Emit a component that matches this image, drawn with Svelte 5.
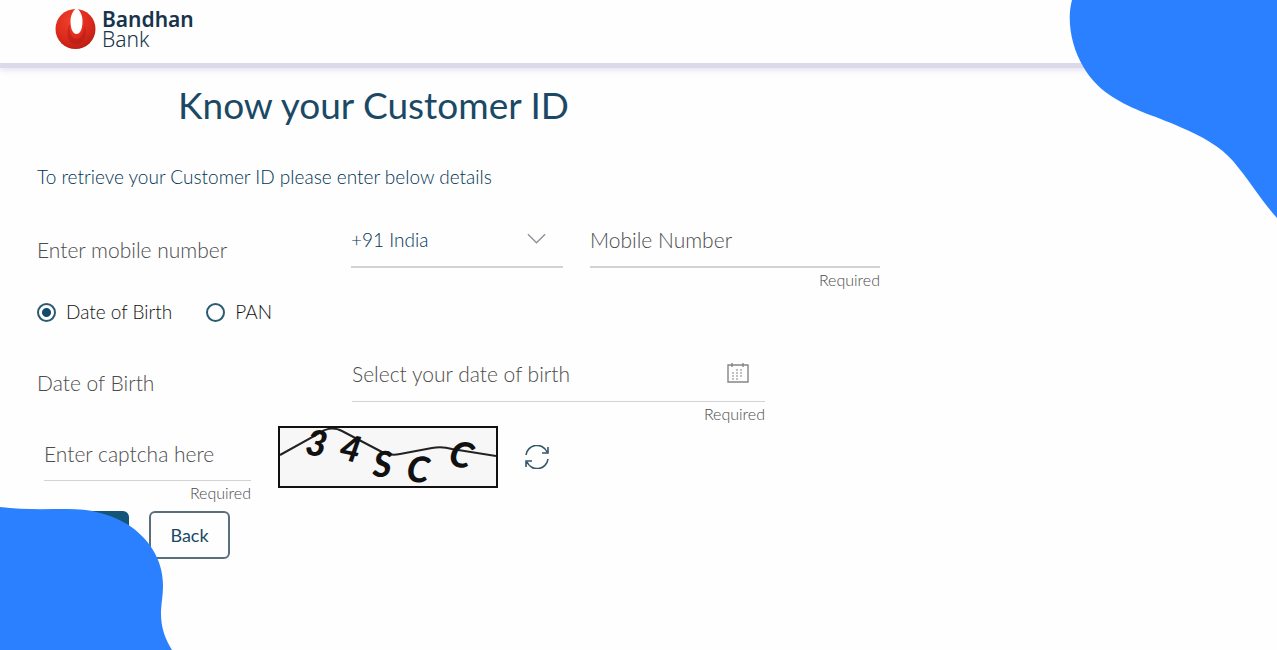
<script>
  const countries = [
    { code: '+91', name: 'India' },
    { code: '+1', name: 'USA' },
    { code: '+44', name: 'UK' },
  ];

  // hand-placed captcha characters
  const captcha = [
    { char: '3', x: 26, y: 28, angle: 10 },
    { char: '4', x: 60, y: 33, angle: 12 },
    { char: 'S', x: 93, y: 49, angle: 4 },
    { char: 'C', x: 127, y: 54, angle: 6 },
    { char: 'C', x: 170, y: 39, angle: 16 },
  ];

  let country = $state('+91');
  let mobile = $state('');
  let method = $state('dob');
  let dob = $state('');
  let captchaValue = $state('');

  function handleSubmit(event) {
    event.preventDefault();
  }
</script>

<div class="page">
  <header class="header">
    <a class="brand" href="/" aria-label="Bandhan Bank">
      <svg class="brand-mark" viewBox="0 0 40 42" aria-hidden="true">
        <defs>
          <radialGradient id="markFill" cx="0.4" cy="0.3" r="0.75">
            <stop offset="0" stop-color="#f0402c" />
            <stop offset="0.6" stop-color="#dd2a1c" />
            <stop offset="1" stop-color="#b81d16" />
          </radialGradient>
        </defs>
        <circle cx="20" cy="21" r="20" fill="url(#markFill)" />
        <path d="M14 16C14 27 17 31 21 31s7-4 8-14c3 9 1 18-8 19-9 0-11-10-7-20z" fill="#a81812" opacity="0.45" />
        <path d="M21 0c4 3 6 8 6 13 0 7-2 13-6 13s-6-6-6-13c0-5 2-10 6-13z" fill="#fff" />
      </svg>
      <span class="brand-name"><b>Bandhan</b><span>Bank</span></span>
    </a>
  </header>

  <main class="content">
    <h1>Know your Customer ID</h1>
    <p class="intro">To retrieve your Customer ID please enter below details</p>

    <form onsubmit={handleSubmit}>
      <div class="row mobile-row">
        <label class="label" for="mobile">Enter mobile number</label>
        <div class="field select-field">
          <select bind:value={country} aria-label="Country code">
            {#each countries as item}
              <option value={item.code}>{item.code} {item.name}</option>
            {/each}
          </select>
          <svg class="chevron" viewBox="0 0 20 12" aria-hidden="true">
            <path d="M1 1l9 9 9-9" />
          </svg>
        </div>
        <div class="field">
          <input id="mobile" type="tel" placeholder="Mobile Number" bind:value={mobile} />
          <span class="hint">Required</span>
        </div>
      </div>

      <div class="methods" role="radiogroup" aria-label="Verify with">
        <label><input type="radio" value="dob" bind:group={method} />Date of Birth</label>
        <label><input type="radio" value="pan" bind:group={method} />PAN</label>
      </div>

      <div class="row dob-row">
        <label class="label" for="dob">Date of Birth</label>
        <div class="field">
          <div class="with-icon">
            <input id="dob" type="text" placeholder="Select your date of birth" bind:value={dob} />
            <button class="icon-button" type="button" aria-label="Open calendar">
              <svg class="calendar" viewBox="0 0 22 20" aria-hidden="true">
                <path d="M1 2h20v17H1zM5 0v4M16 0v4" />
                <path class="dots" d="M9 7h8M5 10h12M5 13h12M5 16h8" />
              </svg>
            </button>
          </div>
          <span class="hint">Required</span>
        </div>
      </div>

      <div class="captcha-row">
        <div class="field">
          <input type="text" placeholder="Enter captcha here" aria-label="Captcha" bind:value={captchaValue} />
          <span class="hint">Required</span>
        </div>
        <svg class="captcha" viewBox="0 0 216 58" role="img" aria-label="Captcha image">
          <path d="M0 27L38 6Q50-3 62 3L102 24Q110 28 120 26L152 20Q162 18 172 21L216 28" />
          {#each captcha as item}
            <text x={item.x} y={item.y} transform="rotate({item.angle} {item.x + 10} {item.y - 12})">{item.char}</text>
          {/each}
        </svg>
        <button class="icon-button" type="button" aria-label="Reload captcha">
          <svg class="reload" viewBox="0 0 24 24" aria-hidden="true">
            <path d="M1 10A11 11 0 0 1 22 7M23 2v6h-6M23 14A11 11 0 0 1 2 17M1 22v-6h6" />
          </svg>
        </button>
      </div>

      <div class="actions">
        <button class="button primary" type="submit" aria-label="Next"></button>
        <button class="button" type="button">Back</button>
      </div>
    </form>
  </main>

  <svg class="blob blob-top" viewBox="0 0 210 220" aria-hidden="true">
    <path d="M5 0C0 18 3 45 17 68C30 90 50 101 73 111C88 117 100 121 113 127C135 136 154 147 166 161C182 180 194 200 210 218V0z" />
  </svg>
  <svg class="blob blob-bottom" viewBox="0 0 180 145" aria-hidden="true">
    <path d="M0 2C22 5 45 4 67 4C90 4 108 8 127 19C149 33 163 55 163 80C163 92 161 99 161 109C161 122 165 134 172 145H0z" />
  </svg>
</div>

<style>
  :global(body) {
    margin: 0;
    background: #fefefe;
  }

  .page {
    position: relative;
    min-height: 100vh;
    overflow: hidden;
    font-family: Lato, "Liberation Sans", sans-serif;
    font-size: 19px;
    font-weight: 300;
    line-height: 24px;
    color: #4c4c4c;
  }

  .header {
    display: flex;
    align-items: center;
    height: 57px;
    padding: 0 55px 6px;
    border-bottom: 5px solid #dcd9e9;
    box-shadow: 0 2px 6px #e3e0f0;
  }

  .brand {
    display: flex;
    align-items: center;
    gap: 6px;
    color: #17344c;
    text-decoration: none;
  }

  .brand-mark {
    width: 41px;
    height: 42px;
  }

  .brand-name {
    display: flex;
    flex-direction: column;
    font-family: "Noto Sans", sans-serif;
    font-size: 21px;
    line-height: 20px;
  }

  .brand-name b {
    font-weight: 600;
  }

  .content {
    max-width: 843px;
    padding: 13px 37px 0;
  }

  h1 {
    margin: 0 0 36px 141px;
    font-size: 37px;
    font-weight: 400;
    line-height: 48px;
    color: #1b4965;
  }

  .intro {
    margin: 0 0 39px;
    color: #003454;
  }

  .row {
    display: grid;
  }

  .mobile-row {
    grid-template-columns: 314fr 212fr 27fr 290fr;
  }

  .mobile-row .field:last-child {
    grid-column: 4;
  }

  .label {
    padding-top: 10px;
    font-size: 21px;
  }

  .field {
    display: flex;
    flex-direction: column;
    min-width: 0;
  }

  .field input,
  .field select {
    width: 100%;
    height: 40px;
    box-sizing: border-box;
    padding: 0 0 14px;
    border: 0;
    border-bottom: 2px solid #d3d3d3;
    border-radius: 0;
    background: transparent;
    font: inherit;
    color: #003454;
    outline: none;
    appearance: none;
  }

  .field input {
    padding-bottom: 15px;
    font-size: 21px;
  }

  .field input::placeholder {
    color: #4c4c4c;
    opacity: 1;
  }

  .hint {
    align-self: flex-end;
    font-size: 16px;
    line-height: 24px;
  }

  .select-field {
    position: relative;
  }

  .chevron {
    position: absolute;
    top: 5px;
    right: 17px;
    width: 19px;
    height: 12px;
    fill: none;
    stroke: #8b9297;
    stroke-width: 1.4;
    pointer-events: none;
  }

  .methods {
    display: flex;
    gap: 34px;
    margin: 8px 0 37px;
    color: #111;
  }

  .methods label {
    display: flex;
    align-items: center;
    gap: 10px;
  }

  .methods input {
    width: 19px;
    height: 19px;
    margin: 0;
    border: 2px solid #2d5a73;
    border-radius: 50%;
    background: #fefefe;
    appearance: none;
  }

  .methods input:checked {
    background: radial-gradient(circle, #114a6b 4px, #fefefe 5px);
  }

  .dob-row {
    grid-template-columns: 315fr 413fr 115fr;
  }

  .with-icon {
    display: flex;
    border-bottom: 1px solid #d3d3d3;
  }

  .with-icon input {
    border-bottom: 0;
  }

  .icon-button {
    display: flex;
    padding: 0;
    border: 0;
    background: none;
    cursor: pointer;
  }

  .with-icon .icon-button {
    padding: 0 16px;
  }

  .calendar {
    width: 22px;
    height: 22px;
    padding-top: 1px;
    fill: none;
    stroke: #858585;
    stroke-width: 1.4;
  }

  .dots {
    stroke-width: 1;
    stroke-dasharray: 2 2;
  }

  .captcha-row {
    display: flex;
    align-items: flex-start;
    padding-left: 7px;
  }

  .captcha-row .field {
    flex: 0 1 207px;
    padding-top: 15px;
  }

  .captcha-row .field input {
    border-bottom-width: 1px;
  }

  .captcha {
    width: 216px;
    height: 58px;
    margin: 0 27px;
    border: 2px solid #111;
    background: #f7f7f7;
  }

  .captcha path {
    fill: none;
    stroke: #222;
    stroke-width: 2;
  }

  .captcha text {
    font-size: 36px;
    font-style: italic;
    font-weight: 900;
    fill: #111;
  }

  .captcha-row .icon-button {
    padding-top: 19px;
  }

  .reload {
    width: 24px;
    height: 24px;
    fill: none;
    stroke: #35576b;
    stroke-width: 1.6;
  }

  .actions {
    display: flex;
    gap: 20px;
    padding-left: 7px;
    margin-top: 6px;
  }

  .button {
    width: 81px;
    height: 48px;
    border: 2px solid #5a6f7c;
    border-radius: 6px;
    background: #fefefe;
    font: inherit;
    font-size: 18px;
    font-weight: 400;
    color: #1b4965;
    cursor: pointer;
  }

  .primary {
    width: 85px;
    border-color: #14557a;
    background: #14557a;
  }

  .blob {
    position: absolute;
    fill: #2a80ff;
    pointer-events: none;
  }

  .blob-top {
    top: 0;
    right: 0;
    width: 210px;
    height: 220px;
  }

  .blob-bottom {
    bottom: 0;
    left: 0;
    width: 180px;
    height: 145px;
  }
</style>
